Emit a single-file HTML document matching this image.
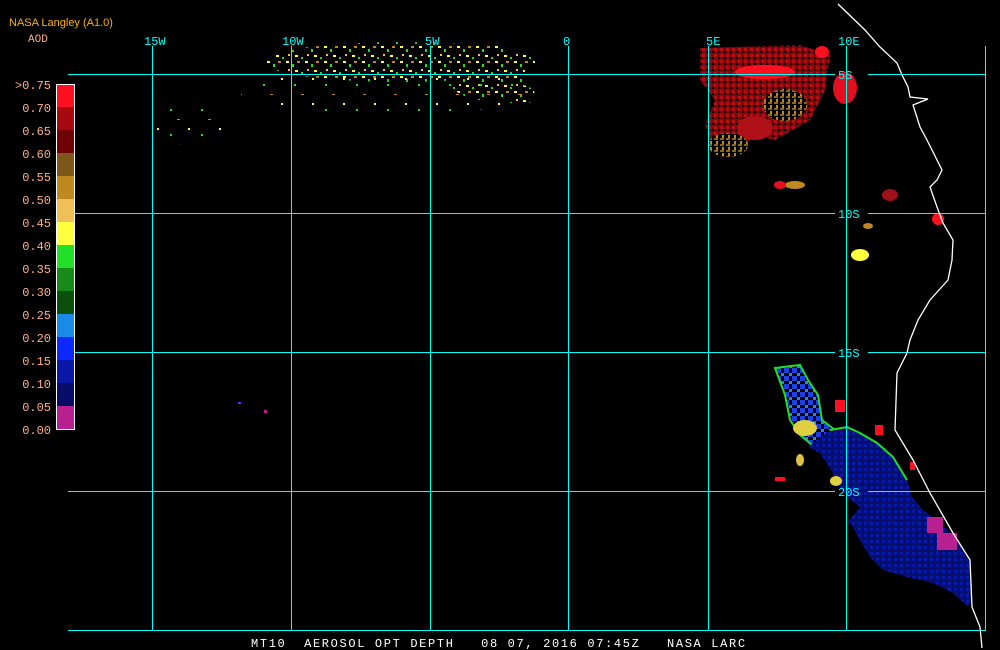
<!DOCTYPE html>
<html><head><meta charset="utf-8"><style>
html,body{margin:0;padding:0;background:#000;width:1000px;height:650px;overflow:hidden}
svg{display:block}
.t{font-family:"Liberation Mono",monospace;}
</style></head><body>
<svg width="1000" height="650" viewBox="0 0 1000 650" xmlns="http://www.w3.org/2000/svg">
<defs>
<pattern id="sp" width="19" height="15" patternUnits="userSpaceOnUse">
<rect x="1" y="1" width="3" height="2" fill="#ffff40"/><rect x="7" y="4" width="2" height="3" fill="#22dd22"/>
<rect x="12" y="1" width="3" height="2" fill="#c08820"/><rect x="3" y="9" width="2" height="2" fill="#f0c060"/>
<rect x="10" y="10" width="3" height="2" fill="#ffff40"/><rect x="16" y="12" width="2" height="2" fill="#22dd22"/>
</pattern>
<pattern id="sp2" width="31" height="25" patternUnits="userSpaceOnUse">
<rect x="2" y="3" width="2" height="2" fill="#ffff40"/><rect x="15" y="9" width="2" height="2" fill="#22dd22"/>
<rect x="22" y="19" width="3" height="1" fill="#c08820"/>
</pattern>
<pattern id="rd" width="6" height="6" patternUnits="userSpaceOnUse">
<rect width="6" height="6" fill="#7a0a0a"/><rect x="0" y="0" width="3" height="3" fill="#b01018"/><rect x="4" y="3" width="2" height="2" fill="#000"/>
</pattern>
<pattern id="br" width="6" height="6" patternUnits="userSpaceOnUse">
<rect width="6" height="6" fill="#000"/><rect x="0" y="0" width="4" height="2" fill="#8a6418"/><rect x="2" y="3" width="2" height="3" fill="#c08820"/>
</pattern>
<pattern id="bl" width="6" height="6" patternUnits="userSpaceOnUse">
<rect width="6" height="6" fill="#061068"/><rect x="0" y="0" width="3" height="3" fill="#0a1aa8"/>
</pattern>
<pattern id="bl2" width="8" height="8" patternUnits="userSpaceOnUse">
<rect width="8" height="8" fill="#000"/><rect x="0" y="0" width="5" height="5" fill="#1a40e8"/><rect x="5" y="5" width="3" height="3" fill="#1a8ae8"/>
</pattern>
</defs>

<!-- top scatter -->
<ellipse cx="400" cy="62" rx="135" ry="20" fill="url(#sp)"/>
<ellipse cx="485" cy="72" rx="40" ry="28" fill="url(#sp)"/>
<ellipse cx="520" cy="95" rx="15" ry="10" fill="url(#sp)"/>
<ellipse cx="390" cy="92" rx="150" ry="22" fill="url(#sp2)"/>
<ellipse cx="190" cy="125" rx="40" ry="20" fill="url(#sp2)"/>

<!-- red region -->
<path d="M700 48 L800 45 L830 55 L825 90 L810 120 L775 140 L755 135 L740 150 L715 155 L705 125 L715 100 L700 80 Z" fill="url(#rd)"/>
<ellipse cx="765" cy="72" rx="30" ry="7" fill="#ff1020"/>
<ellipse cx="755" cy="128" rx="18" ry="12" fill="#b01018"/>
<ellipse cx="785" cy="105" rx="22" ry="16" fill="url(#br)"/>
<ellipse cx="728" cy="145" rx="20" ry="12" fill="url(#br)"/>
<ellipse cx="845" cy="88" rx="12" ry="16" fill="#e01020"/>
<ellipse cx="822" cy="52" rx="7" ry="6" fill="#ff1020"/>
<ellipse cx="795" cy="185" rx="10" ry="4" fill="#c08820"/>
<ellipse cx="780" cy="185" rx="6" ry="4" fill="#e01020"/>
<ellipse cx="890" cy="195" rx="8" ry="6" fill="#a01018"/>
<ellipse cx="938" cy="219" rx="6" ry="6" fill="#ff1020"/>
<ellipse cx="860" cy="255" rx="9" ry="6" fill="#ffff40"/>
<ellipse cx="868" cy="226" rx="5" ry="3" fill="#c08820"/>

<!-- south plume -->
<path d="M775 368 L800 365 L808 380 L818 395 L822 420 L835 430 L830 440 L812 445 L800 435 L790 420 L785 395 Z" fill="url(#bl2)"/>
<path d="M775 368 L800 365 L808 380 L818 395 L822 420 L835 430 L830 440 L812 445 L800 435 L790 420 L785 395 Z" fill="none" stroke="#22dd22" stroke-width="2"/>
<ellipse cx="805" cy="428" rx="12" ry="8" fill="#e0d040"/>
<path d="M808 447 L830 430 L847 427 L860 433 L877 443 L893 457 L907 480 L912 497 L923 510 L940 523 L957 540 L970 563 L972 600 L968 607 L953 593 L933 583 L907 577 L883 570 L870 557 L860 540 L853 527 L848 522 L860 507 L847 497 L840 487 L833 473 L820 453 Z" fill="url(#bl)"/>
<path d="M830 430 L847 427 L860 433 L877 443 L893 457 L907 480" fill="none" stroke="#22dd22" stroke-width="2"/>
<rect x="927" y="517" width="16" height="16" fill="#b82090"/>
<rect x="937" y="533" width="20" height="17" fill="#b82090"/>
<ellipse cx="800" cy="460" rx="4" ry="6" fill="#e0c040"/>
<ellipse cx="836" cy="481" rx="6" ry="5" fill="#e0d040"/>
<rect x="775" y="477" width="10" height="4" fill="#ff1020"/>
<rect x="835" y="400" width="10" height="12" fill="#ff1020"/>
<rect x="875" y="425" width="8" height="10" fill="#ff1020"/>
<rect x="910" y="462" width="5" height="8" fill="#ff1020"/>
<rect x="238" y="402" width="3" height="2" fill="#4040ff"/><rect x="264" y="410" width="3" height="3" fill="#b82090"/>

<!-- grid -->
<g stroke="#00ffff" stroke-width="1" shape-rendering="crispEdges">
<line x1="68" y1="74.5" x2="835" y2="74.5"/><line x1="868" y1="74.5" x2="986" y2="74.5"/>
<line x1="68" y1="213.5" x2="835" y2="213.5"/><line x1="868" y1="213.5" x2="986" y2="213.5"/>
<line x1="68" y1="352.5" x2="835" y2="352.5"/><line x1="868" y1="352.5" x2="986" y2="352.5"/>
<line x1="68" y1="491.5" x2="835" y2="491.5"/><line x1="868" y1="491.5" x2="986" y2="491.5"/>
<line x1="68" y1="630.5" x2="986" y2="630.5"/>
<line x1="152.5" y1="46" x2="152.5" y2="630"/>
<line x1="291.5" y1="46" x2="291.5" y2="630"/>
<line x1="430.5" y1="46" x2="430.5" y2="630"/>
<line x1="568.5" y1="46" x2="568.5" y2="630"/>
<line x1="708.5" y1="46" x2="708.5" y2="630"/>
<line x1="846.5" y1="46" x2="846.5" y2="630"/>
<line x1="985.5" y1="46" x2="985.5" y2="630"/>
</g>
<g class="t" fill="#00ffff" font-size="12">
<text x="144" y="45">15W</text><text x="282" y="45">10W</text><text x="425" y="45">5W</text>
<text x="563" y="45">0</text><text x="706" y="45">5E</text><text x="838" y="45">10E</text>
<text x="838" y="79">5S</text><text x="838" y="218">10S</text><text x="838" y="357">15S</text><text x="838" y="496">20S</text>
</g>

<!-- coast -->
<polyline fill="none" stroke="#fff" stroke-width="1.3" points="838,4 865,30 880,47 897,63 902,75 908,87 910,97 928,99 913,105 920,127 927,140 942,170 937,180 930,187 937,207 943,223 953,240 952,260 948,280 930,300 918,320 910,340 907,353 897,373 895,430 913,460 930,493 953,533 970,560 972,607 980,627 982,648"/>

<!-- legend -->
<text x="9" y="26" font-family="Liberation Sans,sans-serif" font-size="11" fill="#ffb000">NASA Langley (A1.0)</text>
<text x="28" y="42" font-family="Liberation Mono,monospace" font-size="11" fill="#ffb080">AOD</text>
<g shape-rendering="crispEdges">
<rect x="56" y="84" width="19" height="23" fill="#ff1020"/>
<rect x="56" y="107" width="19" height="23" fill="#a80810"/>
<rect x="56" y="130" width="19" height="23" fill="#6e0204"/>
<rect x="56" y="153" width="19" height="23" fill="#7d5818"/>
<rect x="56" y="176" width="19" height="23" fill="#be8a20"/>
<rect x="56" y="199" width="19" height="23" fill="#f0c058"/>
<rect x="56" y="222" width="19" height="23" fill="#ffff40"/>
<rect x="56" y="245" width="19" height="23" fill="#22e02a"/>
<rect x="56" y="268" width="19" height="23" fill="#188a1a"/>
<rect x="56" y="291" width="19" height="23" fill="#0a500c"/>
<rect x="56" y="314" width="19" height="23" fill="#1a8ae8"/>
<rect x="56" y="337" width="19" height="23" fill="#0a28ff"/>
<rect x="56" y="360" width="19" height="23" fill="#0a18a8"/>
<rect x="56" y="383" width="19" height="23" fill="#060c68"/>
<rect x="56" y="406" width="19" height="24" fill="#b82090"/>
<rect x="56.5" y="84.5" width="18" height="345" fill="none" stroke="#fff"/>
</g>
<g class="t" fill="#ffb080" font-size="12" text-anchor="end">
<text x="51" y="89">&gt;0.75</text><text x="51" y="112">0.70</text><text x="51" y="135">0.65</text>
<text x="51" y="158">0.60</text><text x="51" y="181">0.55</text><text x="51" y="204">0.50</text>
<text x="51" y="227">0.45</text><text x="51" y="250">0.40</text><text x="51" y="273">0.35</text>
<text x="51" y="296">0.30</text><text x="51" y="319">0.25</text><text x="51" y="342">0.20</text>
<text x="51" y="365">0.15</text><text x="51" y="388">0.10</text><text x="51" y="411">0.05</text>
<text x="51" y="434">0.00</text>
</g>

<text x="251" y="647" class="t" font-size="12" fill="#fff" letter-spacing="1.65" xml:space="preserve">MT10  AEROSOL OPT DEPTH   08 07, 2016 07:45Z   NASA LARC</text>
</svg>
</body></html>
